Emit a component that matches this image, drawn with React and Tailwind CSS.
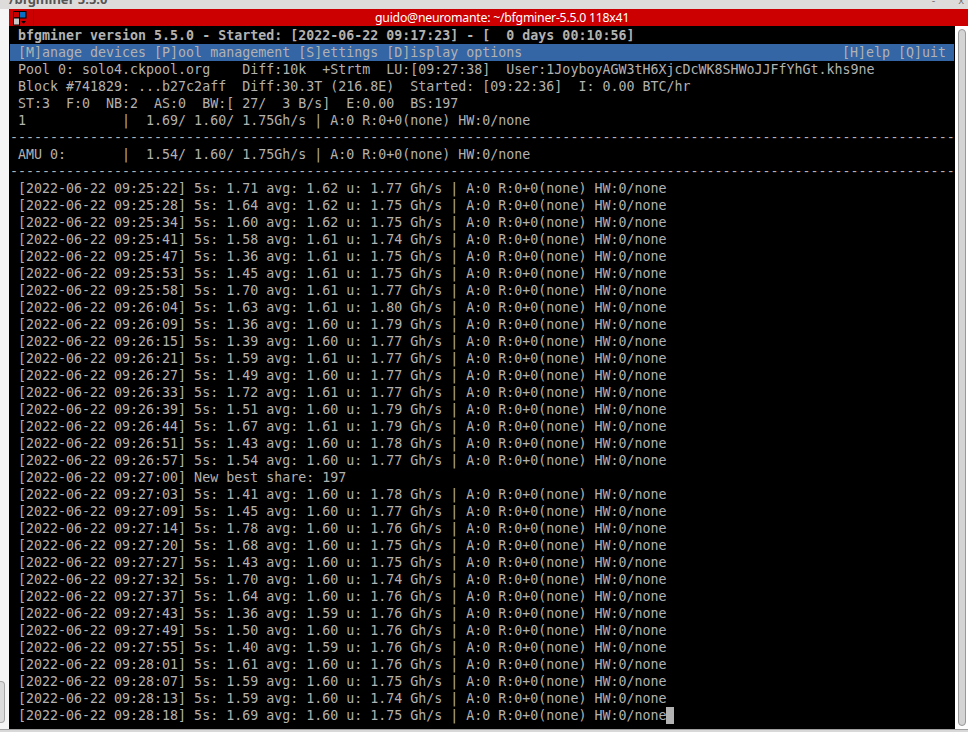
const logs = [
  ["09:25:22", "1.71", "1.62", "1.77"],
  ["09:25:28", "1.64", "1.62", "1.75"],
  ["09:25:34", "1.60", "1.62", "1.75"],
  ["09:25:41", "1.58", "1.61", "1.74"],
  ["09:25:47", "1.36", "1.61", "1.75"],
  ["09:25:53", "1.45", "1.61", "1.75"],
  ["09:25:58", "1.70", "1.61", "1.77"],
  ["09:26:04", "1.63", "1.61", "1.80"],
  ["09:26:09", "1.36", "1.60", "1.79"],
  ["09:26:15", "1.39", "1.60", "1.77"],
  ["09:26:21", "1.59", "1.61", "1.77"],
  ["09:26:27", "1.49", "1.60", "1.77"],
  ["09:26:33", "1.72", "1.61", "1.77"],
  ["09:26:39", "1.51", "1.60", "1.79"],
  ["09:26:44", "1.67", "1.61", "1.79"],
  ["09:26:51", "1.43", "1.60", "1.78"],
  ["09:26:57", "1.54", "1.60", "1.77"],
  null,
  ["09:27:03", "1.41", "1.60", "1.78"],
  ["09:27:09", "1.45", "1.60", "1.77"],
  ["09:27:14", "1.78", "1.60", "1.76"],
  ["09:27:20", "1.68", "1.60", "1.75"],
  ["09:27:27", "1.43", "1.60", "1.75"],
  ["09:27:32", "1.70", "1.60", "1.74"],
  ["09:27:37", "1.64", "1.60", "1.76"],
  ["09:27:43", "1.36", "1.59", "1.76"],
  ["09:27:49", "1.50", "1.60", "1.76"],
  ["09:27:55", "1.40", "1.59", "1.76"],
  ["09:28:01", "1.61", "1.60", "1.76"],
  ["09:28:07", "1.59", "1.60", "1.75"],
  ["09:28:13", "1.59", "1.60", "1.74"],
  ["09:28:18", "1.69", "1.60", "1.75"],
];

const dashes = "-".repeat(118);

function Line({ children, className = "" }) {
  return <div className={`h-[17px] leading-[17px] whitespace-pre ${className}`}>{children}</div>;
}

function TermIcon() {
  return (
    <svg width="14" height="15" viewBox="0 0 14 15">
      <rect x="0.5" y="0.5" width="6" height="6.5" fill="#cc0000" stroke="#000" />
      <rect x="6.5" y="0.5" width="6.5" height="6.5" fill="#0a6fc2" stroke="#000" />
      <rect x="0.5" y="7" width="6" height="7" fill="#c8c8c8" stroke="#000" />
      <path d="M8 10h5l-2.5 3z" fill="#000" />
    </svg>
  );
}

export default function App() {
  return (
    <div className="w-[968px] h-[732px] overflow-hidden bg-[#f6f6f6] flex flex-col font-['DejaVu_Sans_Mono',monospace]">
      {/* window behind, only its bottom edge shows */}
      <div className="h-[9px] shrink-0 bg-[#dedcda] overflow-hidden pl-[9px] pr-[4px] flex justify-between">
        <span className="-mt-[9px] text-[13px] leading-[16px] font-bold text-[#555] font-['Noto_Sans',sans-serif]">/bfgminer 5.5.0</span>
        <span className="-mt-[5px] text-[11px] leading-[10px] text-[#777] font-['Noto_Sans',sans-serif] whitespace-pre">{"-        x"}</span>
      </div>

      <div className="flex flex-1 min-h-0">
        <div className="w-[9px] shrink-0 flex flex-col justify-end pb-[6px]">
          <div className="h-[42px] w-[5px] rounded-r-[4px] border border-l-0 border-[#a8a8a8] bg-[#dcdcdc]" />
        </div>

        <div className="flex-1 min-w-0 flex flex-col">
          <div className="h-[17px] shrink-0 bg-[#cc0000] flex font-['Noto_Sans',sans-serif] text-white text-[12.3px] tracking-[-0.25px]">
            <div className="w-[25px] shrink-0 border-r border-[#a80000] pl-[4px] pt-[2px]">
              <TermIcon />
            </div>
            <span className="pl-[341px] leading-[17px] whitespace-pre">guido@neuromante: ~/bfgminer-5.5.0 118x41</span>
          </div>

          <div className="flex flex-1 min-h-0">
            <div className="w-[946px] shrink-0 bg-black pl-[1px] pr-[1px] pt-[1px] text-[13.3px] text-[#b2b2b2] overflow-hidden">
              <Line className="font-bold">{" bfgminer version 5.5.0 - Started: [2022-06-22 09:17:23] - [  0 days 00:10:56]"}</Line>
              <Line className="bg-[#3465a4] flex justify-between pr-[8px]">
                <span>{" [M]anage devices [P]ool management [S]ettings [D]isplay options"}</span>
                <span>[H]elp [Q]uit</span>
              </Line>
              <Line>{" Pool 0: solo4.ckpool.org    Diff:10k  +Strtm  LU:[09:27:38]  User:1JoyboyAGW3tH6XjcDcWK8SHWoJJFfYhGt.khs9ne"}</Line>
              <Line>{" Block #741829: ...b27c2aff  Diff:30.3T (216.8E)  Started: [09:22:36]  I: 0.00 BTC/hr"}</Line>
              <Line>{" ST:3  F:0  NB:2  AS:0  BW:[ 27/  3 B/s]  E:0.00  BS:197"}</Line>
              <Line>{" 1            |  1.69/ 1.60/ 1.75Gh/s | A:0 R:0+0(none) HW:0/none"}</Line>
              <Line>{dashes}</Line>
              <Line>{" AMU 0:       |  1.54/ 1.60/ 1.75Gh/s | A:0 R:0+0(none) HW:0/none"}</Line>
              <Line>{dashes}</Line>
              {logs.map((row, i) =>
                row ? (
                  <Line key={i}>
                    {` [2022-06-22 ${row[0]}] 5s: ${row[1]} avg: ${row[2]} u: ${row[3]} Gh/s | A:0 R:0+0(none) HW:0/none`}
                    {i === logs.length - 1 && <span className="inline-block w-[8px] h-[17px] bg-[#b2b2b2] align-top" />}
                  </Line>
                ) : (
                  <Line key={i}>{" [2022-06-22 09:27:00] New best share: 197"}</Line>
                )
              )}
            </div>

            {/* scrollbar */}
            <div className="flex-1 bg-white pl-[3px] pr-[2px] pt-[3px] pb-[3px]">
              <div className="h-full rounded-[4px] border border-[#999] bg-[#d4d4d4]" />
            </div>
          </div>
        </div>
      </div>

      <div className="h-[3px] shrink-0 bg-[#d8d8d8] border-t border-[#a0a0a0]" />
    </div>
  );
}
